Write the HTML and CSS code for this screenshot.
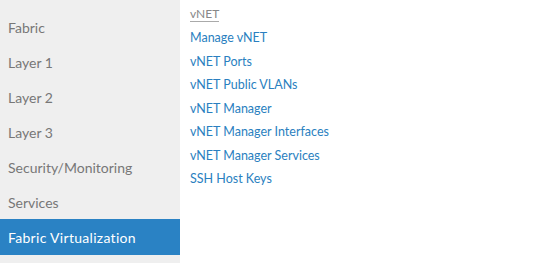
FILE: index.html
```html
<!DOCTYPE html>
<html lang="en">
<head>
    <meta charset="UTF-8">
    <title>Menu</title>
    <link rel="stylesheet" href="styles.css">
</head>
<body>
    <div class="menu">
        <ul class="sidebar">
            <li>Fabric</li>
            <li>Layer 1</li>
            <li>Layer 2</li>
            <li>Layer 3</li>
            <li>Security/Monitoring</li>
            <li>Services</li>
            <li class="active">Fabric Virtualization</li>
        </ul>
        <div class="panel">
            <div class="heading">vNET</div>
            <a href="#">Manage vNET</a>
            <a href="#">vNET Ports</a>
            <a href="#">vNET Public VLANs</a>
            <a href="#">vNET Manager</a>
            <a href="#">vNET Manager Interfaces</a>
            <a href="#">vNET Manager Services</a>
            <a href="#">SSH Host Keys</a>
        </div>
    </div>
</body>
</html>
```

FILE: styles.css
```css
* {
    margin: 0;
    padding: 0;
    box-sizing: border-box;
}

body {
    font-family: 'Lato', sans-serif;
    background: #fff;
    height: 263px;
    overflow: hidden;
}

.menu {
    display: flex;
    height: 263px;
}

.sidebar {
    list-style: none;
    width: 180px;
    background: #efefef;
    padding-top: 9px;
}

.sidebar li {
    height: 35px;
    line-height: 37px;
    padding-left: 8px;
    font-size: 14px;
    color: #777;
}

.sidebar li.active {
    height: 36px;
    background: #2a82c4;
    color: #fff;
    letter-spacing: 0.3px;
}

.panel {
    display: flex;
    flex-direction: column;
    padding: 6px 0 0 10px;
}

.heading {
    font-size: 12px;
    color: #888;
    line-height: 15px;
    border-bottom: 1px solid #aaa;
    align-self: flex-start;
    margin-bottom: 4px;
}

.panel a {
    font-size: 12.5px;
    line-height: 23.5px;
    color: #2a7fc0;
    text-decoration: none;
}
```
